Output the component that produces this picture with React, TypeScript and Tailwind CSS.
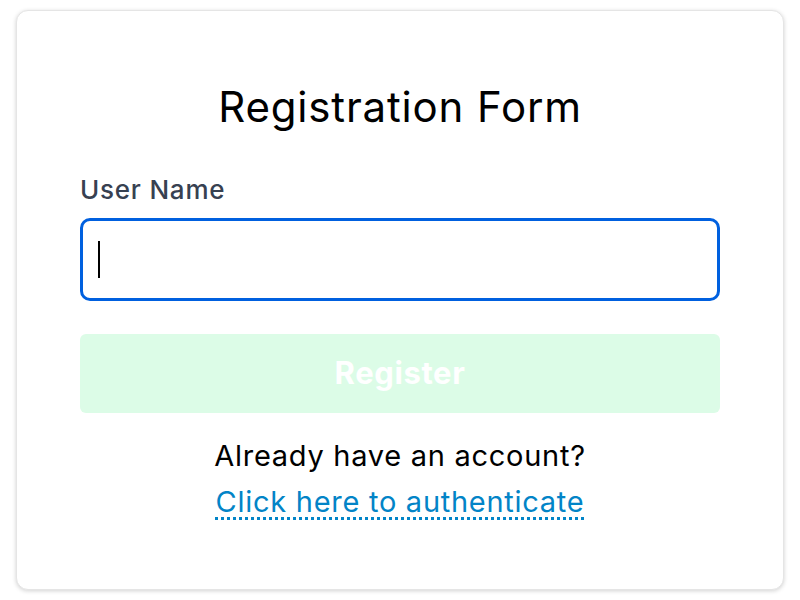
import React from "react";

export default function App() {
  return (
    <div className="w-[800px] h-[600px] bg-white px-[16px] py-[10px]" style={{ fontFamily: "Inter, 'Noto Sans', sans-serif" }}>
      <div className="h-[580px] rounded-[12px] bg-white border border-[#e5e5e5] shadow-[0_1px_4px_rgba(0,0,0,0.18)] px-[63px] pt-[72px] flex flex-col">
        <h1 className="text-[42px] leading-[48px] tracking-[0.02em] text-black text-center font-normal">Registration Form</h1>
        <label className="mt-[43px] text-[26px] leading-[32px] tracking-[0.03em] font-medium text-[#374151]">User Name</label>
        <div className="mt-[12px] h-[83px] rounded-[10px] border-[3px] border-[#0060df] relative">
          <span className="absolute left-[15px] top-[20px] w-[2px] h-[37px] bg-black"></span>
        </div>
        <div className="mt-[33px] h-[79px] rounded-[6px] bg-[#dcfce7] flex items-center justify-center text-white font-bold text-[31px] tracking-[0.02em]">Register</div>
        <div className="mt-[20px] flex flex-col items-center text-[29px] leading-[46px] tracking-[0.025em]">
          <span className="text-black">Already have an account?</span>
          <span className="text-[#0284c7] underline decoration-dotted decoration-[3px] underline-offset-[5px]">Click here to authenticate</span>
        </div>
      </div>
    </div>
  );
}
